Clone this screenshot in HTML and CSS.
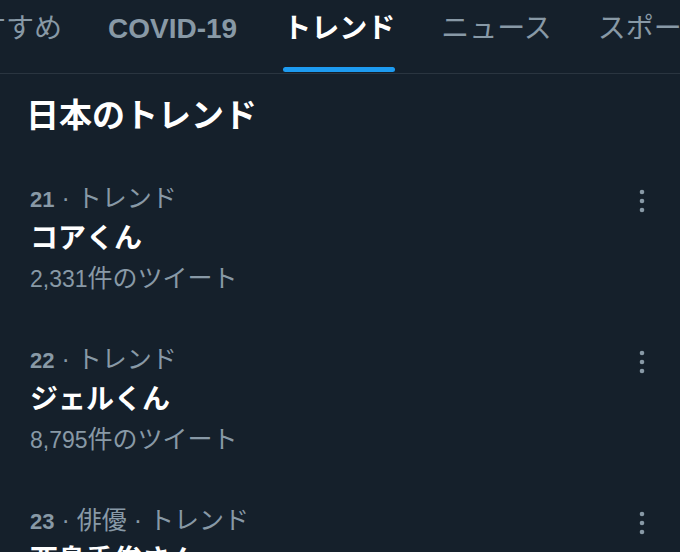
FILE: index.html
```html
<!DOCTYPE html>
<html lang="ja">

<head>
    <meta charset="UTF-8" />
    <meta name="viewport" content="width=device-width, initial-scale=1.0" />
    <title>トレンド</title>
    <link rel="stylesheet" href="styles.css">
</head>

<body>
    <nav class="tabs">
        <a class="tab">おすすめ</a>
        <a class="tab tab-latin">COVID-19</a>
        <a class="tab active">トレンド</a>
        <a class="tab">ニュース</a>
        <a class="tab">スポーツ</a>
    </nav>

    <h2 class="section-title">日本のトレンド</h2>

    <div class="trend-list">
        <div class="trend">
            <div class="trend-body">
                <div class="trend-meta"><b>21</b> · トレンド</div>
                <div class="trend-name">コアくん</div>
                <div class="trend-count"><span class="num">2,331</span>件のツイート</div>
            </div>
            <button class="more" aria-label="その他">
                <svg viewBox="0 0 6 24" width="6" height="24"><circle cx="3" cy="3" r="2.3" /><circle cx="3" cy="12" r="2.3" /><circle cx="3" cy="21" r="2.3" /></svg>
            </button>
        </div>

        <div class="trend">
            <div class="trend-body">
                <div class="trend-meta"><b>22</b> · トレンド</div>
                <div class="trend-name">ジェルくん</div>
                <div class="trend-count"><span class="num">8,795</span>件のツイート</div>
            </div>
            <button class="more" aria-label="その他">
                <svg viewBox="0 0 6 24" width="6" height="24"><circle cx="3" cy="3" r="2.3" /><circle cx="3" cy="12" r="2.3" /><circle cx="3" cy="21" r="2.3" /></svg>
            </button>
        </div>

        <div class="trend">
            <div class="trend-body">
                <div class="trend-meta"><b>23</b> · 俳優 · トレンド</div>
                <div class="trend-name">西島秀俊さん</div>
                <div class="trend-count"><span class="num">5,112</span>件のツイート</div>
            </div>
            <button class="more" aria-label="その他">
                <svg viewBox="0 0 6 24" width="6" height="24"><circle cx="3" cy="3" r="2.3" /><circle cx="3" cy="12" r="2.3" /><circle cx="3" cy="21" r="2.3" /></svg>
            </button>
        </div>
    </div>
</body>

</html>
```

FILE: styles.css
```css
* {
    box-sizing: border-box;
}

html,
body {
    height: 100%;
}

body {
    margin: 0;
    background-color: #15202b;
    color: #ffffff;
    font-family: "Liberation Sans", "Noto Sans CJK JP", sans-serif;
    overflow: hidden;
}

/* Top tabs (scrolled sideways) */
.tabs {
    display: flex;
    height: 74px;
    margin-left: -73px;
    border-bottom: 1px solid #2a3540;
    white-space: nowrap;
}

.tab {
    display: flex;
    flex-direction: column;
    align-items: center;
    padding: 0 23px;
    font-size: 28px;
    line-height: 58px;
    color: #8899a6;
    cursor: pointer;
}

.tab-latin {
    font-weight: 700;
}

.tab.active {
    color: #ffffff;
    font-weight: 700;
}

.tab.active::after {
    content: "";
    display: block;
    align-self: stretch;
    height: 5px;
    margin-top: 9px;
    border-radius: 3px;
    background-color: #1d9bf0;
}

.section-title {
    margin: 22px 0 21px;
    padding-left: 26px;
    font-size: 33px;
    line-height: 40px;
    font-weight: 700;
}

.trend {
    display: flex;
    padding: 20px 0 21px;
}

.trend-body {
    flex: 1;
    padding-left: 30px;
}

.trend-meta {
    font-size: 25px;
    line-height: 42px;
    color: #8899a6;
}

.trend-meta b {
    font-size: 22px;
    line-height: 1;
    font-weight: 700;
}

.trend-name {
    font-size: 28px;
    line-height: 40px;
    font-weight: 700;
}

.trend-count {
    font-size: 25px;
    line-height: 38px;
    color: #8899a6;
}

.num {
    font-size: 23px;
    line-height: 1;
}

.more {
    align-self: flex-start;
    margin: 12px 35px 0 0;
    padding: 0;
    background: none;
    border: none;
    cursor: pointer;
    line-height: 0;
}

.more svg {
    fill: #8899a6;
}
```
